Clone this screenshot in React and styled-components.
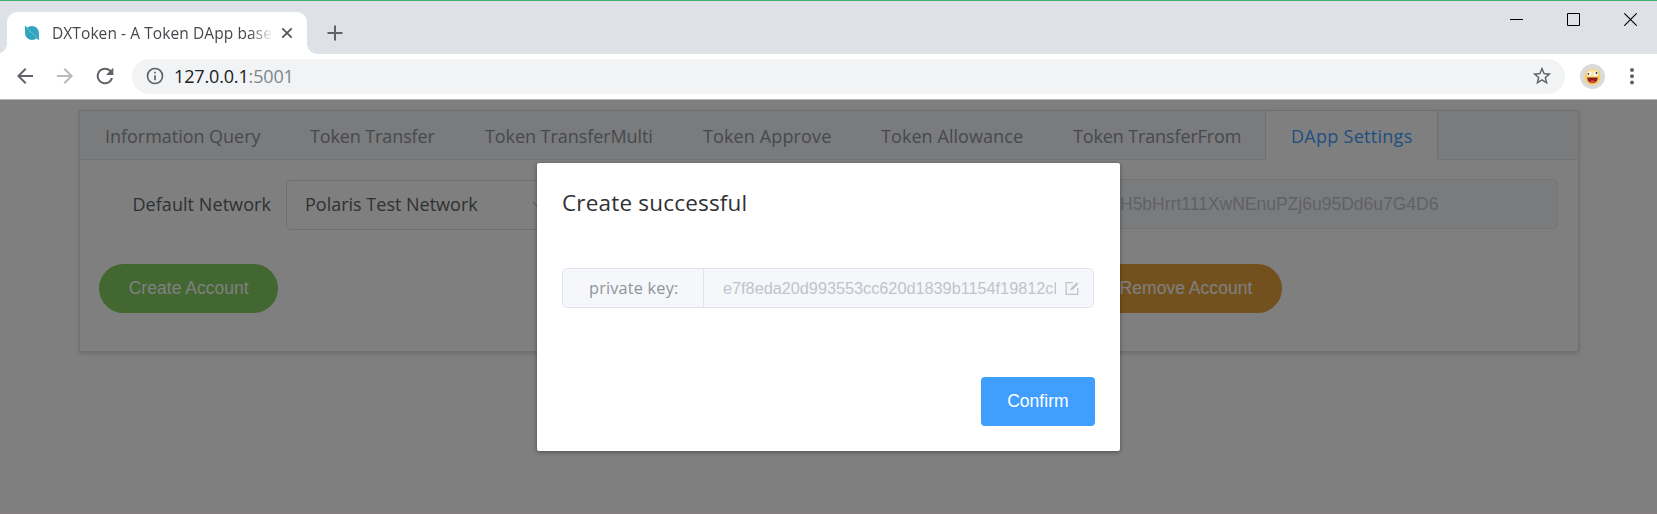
import React from 'react';
import styled, { createGlobalStyle } from 'styled-components';

const ui = '"Open Sans", "Noto Sans", sans-serif';
const arial = '"Liberation Sans", Arial, sans-serif';

const Global = createGlobalStyle`
  * { box-sizing: border-box; }
  body { margin: 0; background: #fff; font-family: ${ui}; }
  button { font: inherit; border: 0; margin: 0; }
`;

const Window = styled.div`
  width: 1657px;
  height: 514px;
  display: flex;
  flex-direction: column;
  overflow: hidden;
  border-bottom: 1px solid #857e80;
`;

/* Browser chrome */
const TabStrip = styled.div`
  height: 54px;
  flex: none;
  display: flex;
  align-items: flex-end;
  padding-left: 7px;
  background: #dee1e6;
  border-top: 1px solid #41b06e;
`;

const BrowserTab = styled.div`
  position: relative;
  width: 300px;
  height: 42px;
  display: flex;
  align-items: center;
  padding: 0 13px 0 17px;
  background: #fff;
  border-radius: 10px 10px 0 0;
  &::before, &::after {
    content: '';
    position: absolute;
    bottom: 0;
    width: 10px;
    height: 10px;
  }
  &::before { left: -10px; background: radial-gradient(circle at 0 0, transparent 9.5px, #fff 10px); }
  &::after { right: -10px; background: radial-gradient(circle at 100% 0, transparent 9.5px, #fff 10px); }
`;

const TabTitle = styled.div`
  width: 219px;
  margin-left: 12px;
  overflow: hidden;
  white-space: nowrap;
  font-size: 15.5px;
  line-height: 22px;
  letter-spacing: 0.08px;
  color: #45484c;
  mask-image: linear-gradient(to right, #000 198px, transparent 221px);
`;

const TabClose = styled.svg`
  margin-left: 10px;
  flex: none;
`;

const NewTab = styled.svg`
  margin: 0 0 13px 20px;
`;

const WindowControls = styled.div`
  display: flex;
  align-self: flex-start;
  gap: 44px;
  margin: 12px 20px 0 auto;
`;

const Toolbar = styled.div`
  height: 46px;
  flex: none;
  display: flex;
  align-items: center;
  padding: 0 13px 1px;
  background: #fff;
  border-bottom: 1px solid #b4b8b8;
`;

const NavIcon = styled.svg`
  width: 24px;
  height: 24px;
  margin-right: 16px;
  fill: ${(p) => (p.$muted ? '#bababa' : '#5f6368')};
`;

const Omnibox = styled.div`
  width: 1433px;
  height: 35px;
  margin-left: -1px;
  display: flex;
  align-items: center;
  padding: 0 12px 0 13px;
  border-radius: 18px;
  background: #f1f3f4;
  fill: #5f6368;
`;

const Url = styled.div`
  flex: 1;
  margin-left: 9px;
  font-size: 18px;
  line-height: 24px;
  letter-spacing: -0.15px;
  color: #202124;
  span { color: #80868b; }
`;

const Avatar = styled.svg`
  margin: 0 24px 0 15px;
`;

/* Page */
const Page = styled.main`
  position: relative;
  flex: 1;
  padding: 10px 78px 0 79px;
  background: #fff;
`;

const Card = styled.section`
  height: 242px;
  border: 1px solid #dcdfe6;
  box-shadow: 0 2px 4px rgba(0, 0, 0, 0.12), 0 0 6px rgba(0, 0, 0, 0.04);
`;

const TabBar = styled.nav`
  height: 49px;
  display: flex;
  margin-right: 1px;
  background: #f5f7fa;
  box-shadow: inset 0 -1px #e4e7ed;
`;

const Tab = styled.div`
  width: ${(p) => p.$width}px;
  padding-left: 25px;
  font-size: 18px;
  line-height: 50px;
  letter-spacing: ${(p) => p.$spacing}px;
  white-space: nowrap;
  color: #909399;
`;

const ActiveTab = styled(Tab)`
  color: #409eff;
  background: #fff;
  border: solid #dcdfe6;
  border-width: 0 1px;
`;

const FormRow = styled.div`
  display: flex;
  align-items: flex-start;
  padding: 19px 20px 0 0;
`;

const Label = styled.label`
  width: 206px;
  padding-right: 15px;
  text-align: right;
  font-size: 18px;
  line-height: 50px;
  letter-spacing: 0.07px;
  color: #606266;
`;

const Select = styled.div`
  width: 278px;
  height: 50px;
  margin-top: 1px;
  display: flex;
  align-items: center;
  justify-content: space-between;
  padding: 0 18px 2px 18px;
  border: 1px solid #dcdfe6;
  border-radius: 5px;
  font-size: 18px;
  color: #606266;
`;

const AddressField = styled.div`
  width: 457px;
  height: 50px;
  margin-left: auto;
  padding-left: 18px;
  border: 1px solid #e4e7ed;
  border-radius: 5px;
  background: #f5f7fa;
  font: 17.5px/49px ${arial};
  color: #c0c4cc;
`;

const Actions = styled.div`
  display: flex;
  justify-content: space-between;
  padding: 34px 296px 0 19px;
`;

const Button = styled.button`
  height: 49px;
  padding: 0 ${(p) => (p.$round ? 29.7 : 26.4)}px;
  border-radius: ${(p) => (p.$round ? 25 : 4)}px;
  background: ${(p) => p.$color};
  color: #fff;
  font: 17.5px/49px ${arial};
  letter-spacing: 0.03px;
  white-space: nowrap;
`;

/* Dialog */
const Overlay = styled.div`
  position: absolute;
  inset: 0;
  display: flex;
  justify-content: center;
  align-items: flex-start;
  padding-top: 63px;
  background: rgba(0, 0, 0, 0.5);
`;

const Dialog = styled.div`
  width: 583px;
  height: 288px;
  display: flex;
  flex-direction: column;
  padding: 25px 26px 25px 25px;
  background: #fff;
  border-radius: 2px;
  box-shadow: 0 1px 4px rgba(0, 0, 0, 0.4);
`;

const DialogTitle = styled.h1`
  margin: -1px 0 0;
  font-size: 22.5px;
  font-weight: 400;
  line-height: 32px;
  letter-spacing: 0.19px;
  color: #303133;
`;

const InputGroup = styled.div`
  height: 40px;
  display: flex;
  margin-top: 49px;
  border: 1px solid #dfe2ea;
  border-radius: 5px;
  background: #f5f7fa;
`;

const Prepend = styled.div`
  width: 141px;
  padding-left: 26px;
  border-right: 1px solid #dfe2ea;
  font-size: 16.25px;
  line-height: 39px;
  letter-spacing: 0.2px;
  color: #909399;
`;

const KeyText = styled.div`
  width: 333px;
  margin-left: 19px;
  overflow: hidden;
  white-space: nowrap;
  font: 16.25px/38px ${arial};
  color: #c0c4cc;
`;

const EditIcon = styled.svg`
  margin: 12px 0 0 9px;
  fill: none;
  stroke: #c0c4cc;
  stroke-width: 1.3;
`;

const DialogFooter = styled.div`
  display: flex;
  justify-content: flex-end;
  margin: auto -1px 0 0;
`;

const tabs = [
  ['Information Query', 205, -0.03],
  ['Token Transfer', 175, -0.12],
  ['Token TransferMulti', 218, -0.07],
  ['Token Approve', 178, 0.13],
  ['Token Allowance', 192, 0.07],
  ['Token TransferFrom', 217, -0.13],
];

export default function App() {
  return (
    <Window>
      <Global />
      <TabStrip>
        <BrowserTab>
          <svg width="16" height="16" viewBox="0 0 16 16">
            <circle cx="8" cy="8" r="7" fill="#32a4be" />
            <path d="M.8.8L4 2.600 2.500 5 1.200 8zM15.200 15.200L12 13.400l1.500-2.400 1.300-3z" fill="#32a4be" />
            <path d="M1.500 1.500l13 13" stroke="#7cc6d7" strokeWidth=".8" />
          </svg>
          <TabTitle>DXToken - A Token DApp based</TabTitle>
          <TabClose width="12" height="12" viewBox="0 0 12 12">
            <path d="M1.300 1.300l9.400 9.400M10.700 1.300l-9.400 9.400" stroke="#54585d" strokeWidth="1.800" />
          </TabClose>
        </BrowserTab>
        <NewTab width="16" height="16" viewBox="0 0 16 16">
          <path d="M8 .5v15M.5 8h15" stroke="#5f6368" strokeWidth="2" />
        </NewTab>
        <WindowControls>
          <svg width="13" height="13"><path d="M0 6.500h13" stroke="#000" /></svg>
          <svg width="13" height="13"><path d="M.5.5h12v12H.5z" fill="none" stroke="#000" /></svg>
          <svg width="13" height="13"><path d="M.3.3l12.400 12.400M12.700.3L.3 12.700" stroke="#000" strokeWidth="1.100" /></svg>
        </WindowControls>
      </TabStrip>

      <Toolbar>
        <NavIcon viewBox="0 0 24 24"><path d="M20 11H7.830l5.590-5.590L12 4l-8 8 8 8 1.410-1.410L7.830 13H20v-2z" /></NavIcon>
        <NavIcon $muted viewBox="0 0 24 24"><path d="M12 4l-1.410 1.410L16.170 11H4v2h12.170l-5.580 5.590L12 20l8-8z" /></NavIcon>
        <NavIcon viewBox="0.5 0.5 23 23"><path d="M17.650 6.350A7.958 7.958 0 0 0 12 4a8 8 0 1 0 7.730 10h-2.080A5.990 5.990 0 0 1 12 18c-3.310 0-6-2.690-6-6s2.690-6 6-6c1.660 0 3.140.69 4.220 1.780L13 11h7V4l-2.350 2.350z" /></NavIcon>
        <Omnibox>
          <svg width="20" height="20" viewBox="0 0 24 24"><path d="M11 7h2v2h-2zm0 4h2v6h-2zm1-9a10 10 0 1 0 0 20 10 10 0 0 0 0-20zm0 18a8 8 0 1 1 0-16 8 8 0 0 1 0 16z" /></svg>
          <Url>127.0.0.1<span>:5001</span></Url>
          <svg width="22" height="22" viewBox="0 0 24 24"><path d="M22 9.240l-7.190-.62L12 2 9.190 8.630 2 9.240l5.460 4.730L5.820 21 12 17.270 18.180 21l-1.630-7.030L22 9.240zM12 15.400l-3.760 2.270 1-4.280-3.320-2.880 4.380-.38L12 6.100l1.710 4.040 4.380.38-3.320 2.880 1 4.280L12 15.400z" /></svg>
        </Omnibox>
        <Avatar width="25" height="25" viewBox="0 0 25 25">
          <circle cx="12.500" cy="12.500" r="12.500" fill="#dadada" />
          <circle cx="12.500" cy="13" r="8" fill="#f7cd62" />
          <ellipse cx="12.500" cy="9.500" rx="6" ry="4" fill="#fbe49a" />
          <circle cx="9.300" cy="9.800" r="2.200" fill="#fff" />
          <circle cx="15.700" cy="9.800" r="2.200" fill="#fff" />
          <circle cx="8.400" cy="9.800" r=".9" fill="#222" />
          <circle cx="16.500" cy="9" r=".9" fill="#222" />
          <path d="M7.300 13.600h10.400c0 3.600-2 5.600-5.200 5.600s-5.200-2-5.200-5.600z" fill="#8c1f1c" />
          <path d="M9.500 17.400c2-1.300 4-1.300 6 0-1.500 1.700-4.500 1.700-6 0z" fill="#ee4a5a" />
        </Avatar>
        <svg width="6" height="18" fill="#5f6368">
          <circle cx="3" cy="3" r="2" /><circle cx="3" cy="9.200" r="2" /><circle cx="3" cy="15.400" r="2" />
        </svg>
      </Toolbar>

      <Page>
        <Card>
          <TabBar>
            {tabs.map(([name, width, spacing]) => (
              <Tab key={name} $width={width} $spacing={spacing}>{name}</Tab>
            ))}
            <ActiveTab $width={173} $spacing={0.28}>DApp Settings</ActiveTab>
          </TabBar>
          <FormRow>
            <Label>Default Network</Label>
            <Select>
              Polaris Test Network
              <svg width="13" height="9" viewBox="0 0 13 9"><path d="M1 2l5.500 5.500L12 2" fill="none" stroke="#c0c4cc" strokeWidth="1.300" /></svg>
            </Select>
            <AddressField>H5bHrrt111XwNEnuPZj6u95Dd6u7G4D6</AddressField>
          </FormRow>
          <Actions>
            <Button $round $color="#85ce61">Create Account</Button>
            <Button $round $color="#e6a23c">Remove Account</Button>
          </Actions>
        </Card>

        <Overlay>
          <Dialog>
            <DialogTitle>Create successful</DialogTitle>
            <InputGroup>
              <Prepend>private key:</Prepend>
              <KeyText>e7f8eda20d993553cc620d1839b1154f19812cb</KeyText>
              <EditIcon width="15" height="15" viewBox="0 0 15 15">
                <path d="M8 1.700H1.200v11.600h11.600V7" />
                <path d="M5.500 9.300l.6-2.200 5.700-5.700 1.600 1.600-5.700 5.700z" fill="#c0c4cc" strokeWidth=".3" />
              </EditIcon>
            </InputGroup>
            <DialogFooter>
              <Button $color="#409eff">Confirm</Button>
            </DialogFooter>
          </Dialog>
        </Overlay>
      </Page>
    </Window>
  );
}
